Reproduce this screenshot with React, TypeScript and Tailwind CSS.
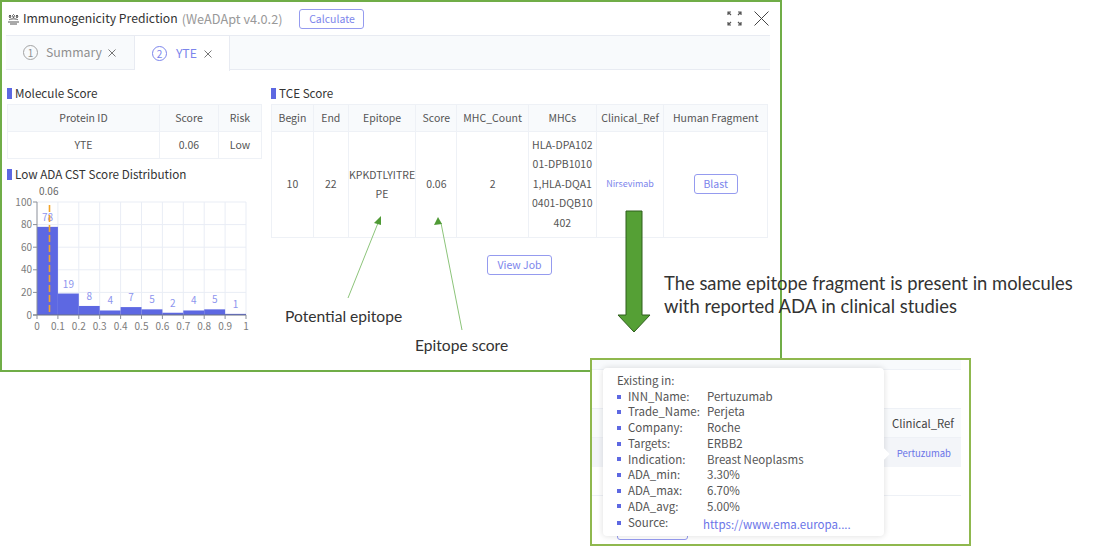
const sans = "font-['Noto_Sans_CJK_SC','Noto_Sans',sans-serif]";

const moleculeHead = ['Protein ID', 'Score', 'Risk'];
const tceHead = [
  { label: 'Begin', w: 'w-[42px]' },
  { label: 'End', w: 'w-[35px]' },
  { label: 'Epitope', w: 'w-[68px]' },
  { label: 'Score', w: 'w-[41px]' },
  { label: 'MHC_Count', w: 'w-[72px]' },
  { label: 'MHCs', w: 'w-[68px]' },
  { label: 'Clinical_Ref', w: 'w-[68px]' },
  { label: 'Human Fragment', w: 'w-[103px]' },
];

const bars = [
  { label: '78', v: 78 },
  { label: '19', v: 19 },
  { label: '8', v: 8 },
  { label: '4', v: 4 },
  { label: '7', v: 7 },
  { label: '5', v: 5 },
  { label: '2', v: 2 },
  { label: '4', v: 4 },
  { label: '5', v: 5 },
  { label: '1', v: 1 },
];

const tipRows = [
  ['INN_Name:', 'Pertuzumab'],
  ['Trade_Name:', 'Perjeta'],
  ['Company:', 'Roche'],
  ['Targets:', 'ERBB2'],
  ['Indication:', 'Breast Neoplasms'],
  ['ADA_min:', '3.30%'],
  ['ADA_max:', '6.70%'],
  ['ADA_avg:', '5.00%'],
];

function Heading({ children }: { children: string }) {
  return (
    <div className="flex items-center gap-[3px] h-[16px] text-[11.700px] text-[#333]">
      <span className="w-[5px] h-[11px] bg-[#5d68e2]" />
      {children}
    </div>
  );
}

function OutlineButton({ children, className }: { children: string; className: string }) {
  return (
    <button className={`flex items-center justify-center rounded-[3px] border border-[#959bef] bg-white text-[10.500px] text-[#7c85ec] ${className}`}>
      {children}
    </button>
  );
}

function CloseMark({ color }: { color: string }) {
  return (
    <svg width="8" height="8" viewBox="0 0 8 8" fill="none" stroke={color} strokeWidth="1">
      <path d="M.500.500l7 7M7.500.500l-7 7" />
    </svg>
  );
}

function Chart() {
  const x0 = 30;
  const step = 20.9;
  const base = 113;
  const unit = 1.13;
  return (
    <svg width="250" height="128" className="block overflow-visible" style={{ fontFamily: 'Noto Sans CJK SC, sans-serif' }}>
      {[0, 1, 2, 3, 4].map((i) => (
        <line key={i} x1={x0} x2={x0 + step * 10} y1={base - 113 + i * 22.6} y2={base - 113 + i * 22.6} stroke="#e9edf5" />
      ))}
      {[1, 2, 3, 4, 5, 6, 7, 8, 9, 10].map((i) => (
        <line key={i} x1={x0 + i * step} x2={x0 + i * step} y1={base - 113} y2={base} stroke="#e9edf5" />
      ))}
      {bars.map((b, i) => (
        <rect key={i} x={x0 + i * step} y={base - b.v * unit} width={step} height={b.v * unit} fill="#5d68e2" />
      ))}
      {bars.map((b, i) => (
        <text key={i} x={x0 + 10.5 + i * step} y={base - b.v * unit - 6} textAnchor="middle" fontSize="10" fill="#8d95ee">
          {b.label}
        </text>
      ))}
      <line x1={x0} x2={x0} y1={base - 113} y2={base} stroke="#8a8f99" />
      <line x1={x0 - 4} x2={x0 + step * 10} y1={base} y2={base} stroke="#6d7280" />
      {[0, 20, 40, 60, 80, 100].map((v, i) => (
        <g key={v}>
          <line x1={x0 - 4} x2={x0} y1={base - i * 22.6} y2={base - i * 22.6} stroke="#8a8f99" />
          <text x={x0 - 5} y={base + 3.500 - i * 22.6} textAnchor="end" fontSize="10" fill="#7c7c7c">{v}</text>
        </g>
      ))}
      {['0', '0.1', '0.2', '0.3', '0.4', '0.5', '0.6', '0.7', '0.8', '0.9', '1'].map((v, i) => (
        <g key={v}>
          <line x1={x0 + i * step} x2={x0 + i * step} y1={base} y2={base + 4} stroke="#8a8f99" />
          <text x={x0 + i * step} y={base + 15} textAnchor="middle" fontSize="10" fill="#7c7c7c">{v}</text>
        </g>
      ))}
      <line x1={x0 + 12.5} x2={x0 + 12.5} y1="3" y2={base} stroke="#f2a428" strokeWidth="1.600" strokeDasharray="7 3" />
    </svg>
  );
}

function Panel() {
  return (
    <div className="relative w-[782px] h-[372px] border-2 border-[#70ad47] bg-white pl-[4px] pr-[10px] shrink-0">
      <div className="flex items-center h-[33px]">
        <svg width="13" height="12" viewBox="0 0 13 12" fill="none" stroke="#555" strokeWidth="1" className="ml-[1px]">
          <path d="M3 5l-1-2 1-1 1 1zM6.500 5l-1-2.500 1-1 1 1zM10 5l-1-2 1-1 1 1z" />
          <path d="M2 7c1-1.500 8-1.500 9 0M1 9h11M3 11h7" />
        </svg>
        <span className="ml-[3px] text-[12.200px] text-[#333]">Immunogenicity Prediction</span>
        <span className="ml-[4px] text-[12.700px] text-[#999]">(WeADApt v4.0.2)</span>
        <OutlineButton className="ml-[17px] w-[65px] h-[20px]">Calculate</OutlineButton>
        <div className="ml-auto flex items-center gap-[12px] pr-[1px]">
          <svg width="15" height="15" viewBox="0 0 15 15" fill="none" stroke="#555" strokeWidth="1.200">
            <path d="M1 4V1h3M1 1l3 3M11 1h3v3M14 1l-3 3M1 11v3h3M1 14l3-3M14 11v3h-3M14 14l-3-3" />
          </svg>
          <svg width="15" height="15" viewBox="0 0 15 15" fill="none" stroke="#444" strokeWidth="1">
            <path d="M.500.500l14 14M14.500.500l-14 14" />
          </svg>
        </div>
      </div>

      <div className="flex h-[35px] border-y border-[#e8ebf2] bg-[#f8fafc]">
        <div className="flex w-[129px] items-center pl-[17px] border-r border-[#e8ebf2] text-[12.300px] text-[#8f8f8f]">
          <span className="flex size-[15px] items-center justify-center rounded-full border border-[#a3a3a3] text-[10px]">1</span>
          <span className="ml-[8px]">Summary</span>
          <span className="ml-[6px]"><CloseMark color="#777" /></span>
        </div>
        <div className="flex w-[95px] h-[35px] items-center pl-[17px] border-r border-[#e8ebf2] bg-white text-[12.300px] text-[#7c85ec]">
          <span className="flex size-[15px] items-center justify-center rounded-full border border-[#7c85ec] text-[10px]">2</span>
          <span className="ml-[9px]">YTE</span>
          <span className="ml-[7px]"><CloseMark color="#777" /></span>
        </div>
      </div>

      <div className="flex mt-[15px] ml-[1px] gap-[9px]">
        <div className="w-[255px]">
          <Heading>Molecule Score</Heading>
          <div className="mt-[3px] border border-[#eef1f6] text-[10.500px] text-[#555]">
            <div className="flex h-[26px] bg-[#f8fafc] items-center text-center">
              {moleculeHead.map((h, i) => (
                <div key={h} className={`${i === 0 ? 'w-[152px]' : i === 1 ? 'w-[59px]' : 'flex-1'} h-full flex items-center justify-center border-r last:border-r-0 border-[#eef1f6] pb-[1px]`}>
                  {h}
                </div>
              ))}
            </div>
            <div className="flex h-[27px] border-t border-[#eef1f6] items-center text-center">
              {['YTE', '0.06', 'Low'].map((h, i) => (
                <div key={h} className={`${i === 0 ? 'w-[152px]' : i === 1 ? 'w-[59px]' : 'flex-1'} h-full flex items-center justify-center border-r last:border-r-0 border-[#eef1f6] pb-[1px]`}>
                  {h}
                </div>
              ))}
            </div>
          </div>
          <div className="mt-[7px]">
            <Heading>Low ADA CST Score Distribution</Heading>
          </div>
          <div className="pl-[32px] text-[10px] leading-[12px] mt-[3px] text-[#666]">0.06</div>
          <div className="mt-[5px]">
            <Chart />
          </div>
        </div>

        <div className="w-[497px]">
          <Heading>TCE Score</Heading>
          <div className="mt-[3px] border border-[#eef1f6] text-[10.500px] text-[#555]">
            <div className="flex h-[26px] bg-[#f8fafc]">
              {tceHead.map((h) => (
                <div key={h.label} className={`${h.w} flex items-center justify-center border-r last:border-r-0 border-[#eef1f6] whitespace-nowrap pb-[1px]`}>
                  {h.label}
                </div>
              ))}
            </div>
            <div className="flex h-[106px] border-t border-[#eef1f6] text-center">
              <div className="w-[42px] flex items-center justify-center border-r border-[#eef1f6] pb-[2px]">10</div>
              <div className="w-[35px] flex items-center justify-center border-r border-[#eef1f6] pb-[2px]">22</div>
              <div className="w-[68px] flex items-center justify-center border-r border-[#eef1f6] leading-[19px] pb-[2px]">
                <div>KPKDTLYITRE<br />PE</div>
              </div>
              <div className="w-[41px] flex items-center justify-center border-r border-[#eef1f6] pb-[2px]">0.06</div>
              <div className="w-[72px] flex items-center justify-center border-r border-[#eef1f6] pb-[2px]">2</div>
              <div className="w-[68px] flex items-center justify-center border-r border-[#eef1f6] leading-[19.500px] pb-[2px]">
                <div>HLA-DPA102<br />01-DPB1010<br />1,HLA-DQA1<br />0401-DQB10<br />402</div>
              </div>
              <div className="w-[68px] flex items-center justify-center border-r border-[#eef1f6] text-[9px] text-[#7c85ec] pb-[2px]">Nirsevimab</div>
              <div className="w-[103px] flex items-center justify-center pb-[2px]">
                <OutlineButton className="w-[44px] h-[20px]">Blast</OutlineButton>
              </div>
            </div>
          </div>
          <div className="flex justify-center mt-[17px]">
            <OutlineButton className="w-[65px] h-[20px]">View Job</OutlineButton>
          </div>
        </div>
      </div>
    </div>
  );
}

function Tooltip() {
  return (
    <div className="absolute left-[590px] top-[358px] w-[381px] h-[188px] border-2 border-[#8fb84e] bg-white overflow-hidden">
      <div className="absolute left-[0px] top-[0px] right-[8px] h-[10px] border-b border-[#eef1f6] bg-[#f8fafc]" />
      <div className="absolute left-[0px] top-[48px] right-[8px] h-[88px] border-b border-[#eef1f6] text-[11px] text-[#444]">
        <div className="h-[30px] border-y border-[#eef1f6] bg-[#f8fafc]" />
        <div className="h-[29px] bg-[#f3f5f9]" />
        <div className="absolute right-[7px] top-[7px] text-[11.300px] text-[#444]">Clinical_Ref</div>
        <div className="absolute right-[10px] top-[38px] text-[9.500px] text-[#6a74e8]">Pertuzumab</div>
      </div>
      <div className="absolute left-[25px] top-[160px] w-[71px] h-[20px] rounded-[3px] border border-[#959bef]" />
      <div className="absolute left-[11px] top-[8px] w-[281px] h-[168px] rounded-[4px] bg-white shadow-[0_0_6px_rgba(0,0,0,0.14)] text-[11.500px] leading-[15.700px] text-[#555] pl-[14px] pt-[5px]">
        <div>Existing in:</div>
        {tipRows.map(([k, v]) => (
          <div key={k} className="flex items-center">
            <span className="absolute left-[14px] size-[4px] bg-[#5d68e2]" />
            <span className="ml-[11px] w-[79px]">{k}</span>
            <span>{v}</span>
          </div>
        ))}
        <div className="flex mt-[1px]">
          <span className="absolute left-[14px] mt-[6px] size-[4px] bg-[#5d68e2]" />
          <span className="ml-[11px] w-[75px]">Source:</span>
          <span className="mt-[2px] text-[#6a74e8]">https://www.ema.europa....</span>
        </div>
        <span className="absolute -right-[4px] top-[82px] size-[8px] rotate-45 bg-white" />
      </div>
    </div>
  );
}

function Annotations() {
  return (
    <>
      <svg className="absolute left-0 top-0 pointer-events-none" width="1106" height="546">
        <path d="M348 298L378 223" stroke="#8cc47a" strokeWidth="1" fill="none" />
        <path d="M381 216l-7 7 7 2z" fill="#4f9a35" />
        <path d="M462 330L441 223" stroke="#8cc47a" strokeWidth="1" fill="none" />
        <path d="M438 217l-4 8 8-1z" fill="#4f9a35" />
        <path d="M626 211h16v104h8l-16 17-16-17h8z" fill="#55a035" stroke="#2f5e1d" strokeWidth="1" />
      </svg>
      <div className="absolute left-[285px] top-[305px] font-['Lato',sans-serif] text-[15.600px] text-[#333]">Potential epitope</div>
      <div className="absolute left-[415px] top-[334px] font-['Lato',sans-serif] text-[15.600px] text-[#333]">Epitope score</div>
      <div className="absolute left-[664px] top-[272px] font-['Lato',sans-serif] text-[18.400px] leading-[23px] text-[#333]">
        The same epitope fragment is present in molecules<br />with reported ADA in clinical studies
      </div>
    </>
  );
}

export default function App() {
  return (
    <div className={`relative w-[1106px] h-[546px] overflow-hidden bg-white ${sans}`}>
      <Panel />
      <Annotations />
      <Tooltip />
    </div>
  );
}
